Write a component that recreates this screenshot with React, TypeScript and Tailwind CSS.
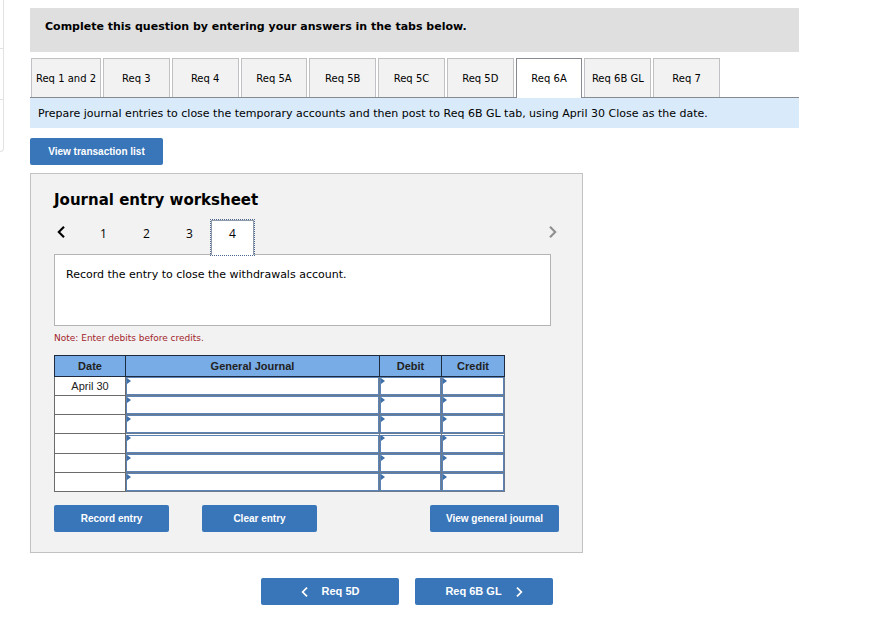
import React, { useState } from 'react';

const tabs = [
  'Req 1 and 2',
  'Req 3',
  'Req 4',
  'Req 5A',
  'Req 5B',
  'Req 5C',
  'Req 5D',
  'Req 6A',
  'Req 6B GL',
  'Req 7',
];

const rows = ['April 30', '', '', '', '', ''];
const fields = ['General Journal', 'Debit', 'Credit'];

interface ChevronProps {
  direction: 'left' | 'right';
  className?: string;
}

function Chevron({ direction, className }: ChevronProps) {
  return (
    <svg
      viewBox="0 0 8 12"
      className={className}
      fill="none"
      stroke="currentColor"
      strokeWidth="2.1"
      aria-hidden="true"
    >
      <path d={direction === 'left' ? 'M7 0.8 L1.8 6 L7 11.2' : 'M1 0.8 L6.2 6 L1 11.2'} />
    </svg>
  );
}

interface ActionButtonProps {
  className: string;
  children: React.ReactNode;
}

function ActionButton({ className, children }: ActionButtonProps) {
  return (
    <button
      type="button"
      className={`h-[27px] rounded-xs bg-[#3875b9] font-['Liberation_Sans',sans-serif] font-bold text-white ${className}`}
    >
      {children}
    </button>
  );
}

function JournalTable() {
  return (
    <table className="h-[137px] w-[451px] table-fixed border-collapse bg-white font-['Liberation_Sans',sans-serif] text-[11px] leading-4 text-[#222]">
      <colgroup>
        <col className="w-[71px]" />
        <col />
        <col className="w-[62px]" />
        <col className="w-[63px]" />
      </colgroup>
      <thead>
        <tr className="h-[21px] bg-[#78ace6]">
          <th className="border border-[#1c2b3d] p-0">Date</th>
          {fields.map((field) => (
            <th key={field} className="border border-[#1c2b3d] p-0">
              {field}
            </th>
          ))}
        </tr>
      </thead>
      <tbody>
        {rows.map((date, index) => (
          <tr key={index} className="h-[19px]">
            <td className="border border-[#6b6b6b] p-0 text-center">{date}</td>
            {fields.map((field) => (
              <td key={field} className="relative border border-[#6a7b90] p-0">
                <input
                  type="text"
                  aria-label={`${field}, line ${index + 1}`}
                  className="block h-[18px] w-full border border-[#5b83b5] bg-white px-2 outline-none"
                />
                <svg viewBox="0 0 4 6" className="absolute top-px left-px h-[6px] w-[4px] fill-[#3f6fa8]" aria-hidden="true">
                  <path d="M0 0 L4 3 L0 6 Z" />
                </svg>
              </td>
            ))}
          </tr>
        ))}
      </tbody>
    </table>
  );
}

function Worksheet() {
  const [page, setPage] = useState(4);

  return (
    <section className="mt-2 max-w-[553px] border border-[#c0c2c4] bg-[#f2f2f2] px-[23px] pt-4 pb-5">
      <h2 className="text-[15px] leading-5 font-bold">Journal entry worksheet</h2>

      <div className="mt-[10px] mr-[2px] flex h-[34px] items-start">
        <button type="button" aria-label="Previous entry" className="flex h-6 w-7 items-center pl-[3px]">
          <Chevron direction="left" className="h-3 w-2" />
        </button>
        {[1, 2, 3, 4].map((n) => (
          <button
            key={n}
            type="button"
            onClick={() => setPage(n)}
            className={`w-[43px] text-center font-['Open_Sans',sans-serif] text-[12px] leading-4 ${
              n === page
                ? 'relative h-[35px] border border-b-0 border-[#8f99a8] bg-white pb-2 outline-1 outline-[#4a6791] outline-dotted'
                : 'h-[27px]'
            }`}
          >
            {n}
          </button>
        ))}
        <button type="button" aria-label="Next entry" className="ml-auto flex h-6 items-center text-[#8f8f8f]">
          <Chevron direction="right" className="h-3 w-2" />
        </button>
      </div>

      <div className="mr-2 h-[72px] border border-[#b4b4b4] bg-white px-[11px] py-3 text-[11px] leading-4">
        Record the entry to close the withdrawals account.
      </div>

      <p className="mt-1 mb-[9px] text-[9px] leading-4 text-[#a3242b]">Note: Enter debits before credits.</p>

      <JournalTable />

      <div className="mt-[13px] flex">
        <ActionButton className="w-[115px] text-[10px]">Record entry</ActionButton>
        <ActionButton className="ml-[33px] w-[115px] text-[10px]">Clear entry</ActionButton>
        <ActionButton className="ml-auto w-[129px] text-[10px]">View general journal</ActionButton>
      </div>
    </section>
  );
}

export default function App() {
  const [active, setActive] = useState('Req 6A');

  return (
    <div className="flex items-start bg-white font-['DejaVu_Sans',sans-serif] text-black">
      <aside className="w-1 shrink-0 rounded-br-sm border-r border-b border-[#e2e2e2]">
        <div className="h-[49px] border-b border-[#e2e2e2]" />
        <div className="h-[51px] border-b border-[#e2e2e2]" />
        <div className="h-[51px]" />
      </aside>

      <main className="mr-24 ml-[26px] min-w-0 flex-1 pt-2">
        <header className="h-11 bg-[#dfdfdf] px-[15px] py-[11px]">
          <h1 className="text-[11px] leading-4 font-bold">Complete this question by entering your answers in the tabs below.</h1>
        </header>

        <div className="mt-[6px] border-b border-[#868b91] pl-px">
          <div
            role="tablist"
            className="grid h-[39px] max-w-[689px] grid-cols-[70px_repeat(9,minmax(0,1fr))] gap-[2px]"
          >
            {tabs.map((tab) => (
              <button
                key={tab}
                type="button"
                role="tab"
                aria-selected={tab === active}
                onClick={() => setActive(tab)}
                className={`border border-b-0 text-[10px] whitespace-nowrap ${
                  tab === active ? 'relative -mb-px border-[#868b91] bg-white' : 'border-[#bfc1c4] bg-[#f2f2f2]'
                }`}
              >
                {tab}
              </button>
            ))}
          </div>
        </div>

        <p className="bg-[#d9ebfa] px-2 pt-2 pb-[6px] text-[11px] leading-4">
          Prepare journal entries to close the temporary accounts and then post to Req 6B GL tab, using April 30 Close as
          the date.
        </p>

        <ActionButton className="mt-[10px] block w-[133px] text-[10px]">View transaction list</ActionButton>

        <Worksheet />

        <nav className="mt-[25px] flex max-w-[553px] justify-end gap-4 pr-[30px] pb-9" aria-label="Requirements">
          <ActionButton className="flex w-[138px] items-center justify-center gap-[14px] text-[11px]">
            <Chevron direction="left" className="h-[10px] w-[7px]" />
            Req 5D
          </ActionButton>
          <ActionButton className="flex w-[138px] items-center justify-center gap-[14px] text-[11px]">
            Req 6B GL
            <Chevron direction="right" className="h-[10px] w-[7px]" />
          </ActionButton>
        </nav>
      </main>
    </div>
  );
}
